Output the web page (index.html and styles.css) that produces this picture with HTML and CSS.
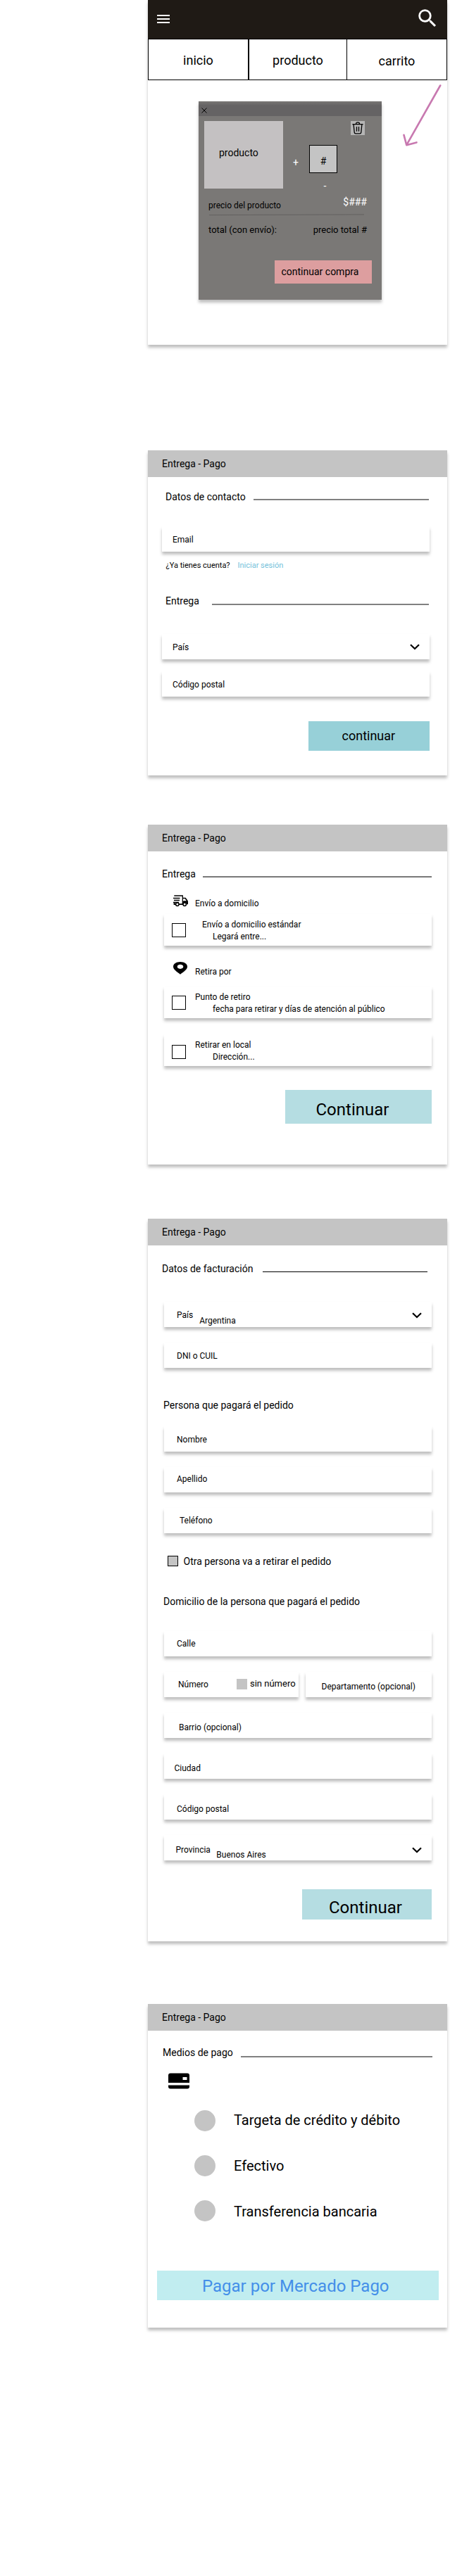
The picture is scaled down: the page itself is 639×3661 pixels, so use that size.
FILE: index.html
```html
<!DOCTYPE html>
<html lang="es">
<head>
<meta charset="utf-8">
<title>Entrega - Pago</title>
<link rel="stylesheet" href="styles.css">
</head>
<body>
<main class="screens">

  <section class="screen screen-cart">
    <header class="topbar">
      <svg class="icon-menu" width="18" height="12" viewBox="0 0 18 12" fill="#fff"><path d="M0 0h18v2H0zM0 5h18v2H0zM0 10h18v2H0z"/></svg>
      <svg class="icon-search" width="34" height="34" viewBox="0 0 24 24" fill="#fff"><path d="M15.5 14h-.79l-.28-.27A6.471 6.471 0 0 0 16 9.5 6.5 6.5 0 1 0 9.5 16c1.61 0 3.09-.59 4.23-1.57l.27.28v.79l5 4.99L20.49 19l-4.99-5zm-6 0C7.01 14 5 11.99 5 9.5S7.01 5 9.5 5 14 7.01 14 9.5 11.99 14 9.5 14z"/></svg>
    </header>
    <nav class="tabs">
      <a class="tab tab-home">inicio</a>
      <a class="tab tab-product">producto</a>
      <a class="tab tab-cart">carrito</a>
    </nav>
    <div class="modal">
      <div class="modal-bar">
        <svg width="8" height="8" viewBox="0 0 8 8" stroke="#000" stroke-width="1"><path d="M.5.5l7 7M7.5.5l-7 7"/></svg>
      </div>
      <div class="item">
        <div class="thumb">producto</div>
        <span class="plus">+</span>
        <div class="qty">
          <span class="qty-box">#</span>
          <span class="minus">-</span>
        </div>
        <span class="trash">
          <svg width="20" height="20" viewBox="0 0 20 20" fill="none" stroke="#000" stroke-width="1.3"><path d="M2.4 4.6h15.2M7.4 4.4c0-3.3 5.2-3.3 5.2 0M4.1 4.8l1.1 11.3c.1 1 .8 1.7 1.8 1.7h6c1 0 1.700-.7 1.800-1.700L15.900 4.800M8.500 8v6.800M11.500 8v6.800"/></svg>
        </span>
      </div>
      <div class="price-row"><span>precio del producto</span><span class="price">$###</span></div>
      <svg class="divider" width="220" height="3" viewBox="0 0 220 3" stroke="#636160"><path d="M0 1.600L220 .9"/></svg>
      <div class="total-row"><span>total (con envío):</span><span>precio total #</span></div>
      <a class="btn btn-buy">continuar compra</a>
    </div>
    <svg class="arrow" width="56" height="90" viewBox="0 0 56 90" fill="none" stroke="#c879b0" stroke-width="2.600"><path d="M53.200 1.500L5.300 86.200M1.500 71.800l3.800 14.400 14.200-3.800" stroke-linecap="round" stroke-linejoin="round"/></svg>
  </section>

  <section class="screen screen-contact">
    <header class="bar">Entrega - Pago</header>
    <div class="title t-contact"><span>Datos de contacto</span><i class="rule"></i></div>
    <div class="field f-email">Email</div>
    <p class="login"><span>¿Ya tienes cuenta?</span><a class="login-link">Iniciar sesión</a></p>
    <div class="title t-delivery"><span>Entrega</span><i class="rule"></i></div>
    <div class="field f-country">País<svg class="chevron" width="14" height="9" viewBox="0 0 14 9"><path d="M1 1.200l6 5.800 6-5.800"/></svg></div>
    <div class="field f-zip">Código postal</div>
    <a class="btn btn-contact">continuar</a>
  </section>

  <section class="screen screen-shipping">
    <header class="bar">Entrega - Pago</header>
    <div class="title t-shipping"><span>Entrega</span><i class="rule"></i></div>
    <div class="method m-truck">
      <svg width="22" height="17" viewBox="0 0 22 17" fill="none" stroke="#000"><path d="M2.300 1h12v12M1 4.500h9.500M2 7.500h8M1 10.500h8" stroke-width="1.300"/><path d="M2.500 10v3.200h2M9 13.200h6M14.500 4.500h3.700l2.800 4" stroke-width="1.700"/><path d="M16 8.300h6v5h-2.300v-2.300h-5V9z" fill="#000" stroke="none"/><circle cx="6.800" cy="13.300" r="2.200" stroke-width="1.500"/><circle cx="17.200" cy="13.300" r="2.200" stroke-width="1.500" fill="#fff"/></svg>
      <span>Envío a domicilio</span>
    </div>
    <div class="option o-home"><i class="check"></i><div class="option-text"><b>Envío a domicilio estándar</b><small>Legará entre...</small></div></div>
    <div class="method m-pin">
      <svg width="20" height="18" viewBox="0 0 20 18"><path fill-rule="evenodd" d="M10 0C4.300 0 0 2.800 0 6.700 0 11 5 13.700 10 17.700 15 13.700 20 11 20 6.700 20 2.800 15.700 0 10 0zm0 3.700c2.600 0 4.300 1.300 4.300 3.100S12.600 9.900 10 9.900 5.700 8.600 5.700 6.800 7.400 3.700 10 3.700z"/></svg>
      <span>Retira por</span>
    </div>
    <div class="option o-point"><i class="check"></i><div class="option-text"><b>Punto de retiro</b><small>fecha para retirar y días de atención al público</small></div></div>
    <div class="option o-local"><i class="check"></i><div class="option-text"><b>Retirar en local</b><small>Dirección...</small></div></div>
    <a class="btn btn-shipping">Continuar</a>
  </section>

  <section class="screen screen-billing">
    <header class="bar">Entrega - Pago</header>
    <div class="title t-billing"><span>Datos de facturación</span><i class="rule"></i></div>
    <div class="field f-bill-country">País<span class="value">Argentina</span><svg class="chevron" width="14" height="9" viewBox="0 0 14 9"><path d="M1 1.200l6 5.800 6-5.800"/></svg></div>
    <div class="field f-id">DNI o CUIL</div>
    <h3 class="subtitle s-payer">Persona que pagará el pedido</h3>
    <div class="field f-name">Nombre</div>
    <div class="field f-surname">Apellido</div>
    <div class="field f-phone">Teléfono</div>
    <label class="other"><i class="box"></i>Otra persona va a retirar el pedido</label>
    <h3 class="subtitle s-address">Domicilio de la persona que pagará el pedido</h3>
    <div class="field f-street">Calle</div>
    <div class="pair">
      <div class="field f-number">Número<i class="box"></i><span class="no-number">sin número</span></div>
      <div class="field f-flat">Departamento (opcional)</div>
    </div>
    <div class="field f-area">Barrio (opcional)</div>
    <div class="field f-city">Ciudad</div>
    <div class="field f-bill-zip">Código postal</div>
    <div class="field f-state">Provincia<span class="value">Buenos Aires</span><svg class="chevron" width="14" height="9" viewBox="0 0 14 9"><path d="M1 1.200l6 5.800 6-5.800"/></svg></div>
    <a class="btn btn-billing">Continuar</a>
  </section>

  <section class="screen screen-payment">
    <header class="bar">Entrega - Pago</header>
    <div class="title t-payment"><span>Medios de pago</span><i class="rule"></i></div>
    <svg class="icon-card" width="30" height="23" viewBox="0 0 30 23"><path fill-rule="evenodd" d="M3 .5h24a3 3 0 0 1 3 3V14H0V3.500a3 3 0 0 1 3-3zm17.500 5.500v4h6V6zM0 17.500h30v2a3 3 0 0 1-3 3H3a3 3 0 0 1-3-3z"/></svg>
    <ul class="methods">
      <li class="pay p-card"><i class="radio"></i><span>Targeta de crédito y débito</span></li>
      <li class="pay p-cash"><i class="radio"></i><span>Efectivo</span></li>
      <li class="pay p-bank"><i class="radio"></i><span>Transferencia bancaria</span></li>
    </ul>
    <a class="btn btn-pay">Pagar por Mercado Pago</a>
  </section>

</main>
</body>
</html>
```

FILE: styles.css
```css
* { box-sizing: border-box; }

body {
  margin: 0;
  min-height: 3661px;
  background: #fff;
  color: #000;
  font: 12px/14px Roboto, "Liberation Sans", sans-serif;
}

svg { display: block; flex: none; }
i { font-style: normal; flex: none; }

.screens {
  display: flex;
  flex-direction: column;
  width: 425px;
  margin-left: 210px;
}

.screen {
  position: relative;
  display: flex;
  flex-direction: column;
  align-items: stretch;
  flex: none;
  background: #fff;
  box-shadow: 0 4px 4px rgba(0, 0, 0, .25);
}
.screen-cart { height: 490px; }
.screen-contact { height: 462px; margin-top: 150px; }
.screen-shipping { height: 483px; margin-top: 70px; }
.screen-billing { height: 1027px; margin-top: 77px; }
.screen-payment { height: 460px; margin-top: 89px; }

/* Cart */
.topbar {
  display: flex;
  justify-content: space-between;
  height: 55px;
  padding: 9px 11px 0 13px;
  background: #1f1a15;
}
.icon-menu { margin-top: 12px; }
.tabs { display: flex; height: 59px; font-size: 18px; line-height: 21px; }
.tab { border: 1px solid #000; padding-top: 19px; text-align: center; }
.tab-home { width: 143px; }
.tab-product { width: 140px; }
.tab-cart { width: 142px; border-left: 0; padding-top: 20px; }

.modal {
  display: flex;
  flex-direction: column;
  width: 260px;
  height: 282px;
  margin: 30px 0 0 72px;
  background: #7a7876;
  box-shadow: 0 4px 4px rgba(0, 0, 0, .25);
}
.modal-bar {
  height: 21px;
  padding: 9px 0 0 3.500px;
  background: linear-gradient(#797775, #656364 6px);
}
.item { display: flex; align-items: flex-start; height: 96px; margin: 7px 0 0 8px; }
.thumb {
  width: 112px;
  height: 96px;
  padding: 37px 0 0 21px;
  background: #c4c1c2;
  font-size: 14px;
  line-height: 16px;
}
.plus { width: 37px; padding: 51px 0 0 14px; color: #fff; font-size: 14px; line-height: 16px; }
.qty { display: flex; flex-direction: column; align-items: center; width: 40px; padding-top: 34px; }
.qty-box {
  width: 40px;
  height: 40px;
  padding-top: 14px;
  border: 1px solid #000;
  background: #c4c4c4;
  font-size: 14px;
  line-height: 16px;
  text-align: center;
}
.minus { margin: 11px 0 0 5px; color: #fff; font-size: 14px; }
.trash { width: 20px; height: 20px; margin-left: 19px; background: #b5b5b5; }
.price-row { display: flex; justify-content: space-between; height: 25px; margin: 11px 21px 0 14px; }
.price-row span:first-child { margin-top: 6px; }
.price-row .price { color: #fff; font-size: 14px; line-height: 16px; }
.divider { margin-left: 15px; }
.total-row { display: flex; justify-content: space-between; margin: 12px 21px 0 14px; font-size: 13px; line-height: 15px; }

.arrow { position: absolute; left: 362px; top: 120px; }

/* Shared form pieces */
.bar { height: 38px; padding: 11px 0 0 20px; background: #c4c4c4; font-size: 14px; line-height: 16px; }
.title { display: flex; justify-content: space-between; height: 16px; font-size: 14px; line-height: 16px; }
.rule { height: 2px; background: #808080; }

.field {
  display: flex;
  align-items: flex-start;
  flex: none;
  height: 36px;
  margin: 22px 22px 0 23px;
  padding: 12px 14.500px 0 18px;
  background: #fff;
  box-shadow: 0 4px 4px rgba(0, 0, 0, .25);
}
.chevron { margin: 2px 0 0 auto; fill: none; stroke: #000; stroke-width: 2.200; }

.btn { flex: none; align-self: flex-end; background: #b5dde2; font-size: 24px; line-height: 28px; }
.btn-buy { width: 138px; height: 33px; margin: 36px 14px 0 0; padding: 8px 0 0 9.500px; background: #dd9e9f; font-size: 14px; line-height: 16px; }
.btn-contact { width: 172px; height: 42px; margin: 35px 25px 0 0; padding: 10px 0 0 47.500px; background: #97d0d8; font-size: 18px; line-height: 21px; }
.btn-shipping { width: 208px; height: 48px; margin: 34px 22px 0 0; padding: 14px 0 0 43.500px; }
.btn-billing { width: 184px; height: 43px; margin: 41px 22px 0 0; padding: 12px 0 0 38px; }
.btn-pay { width: 400px; height: 42px; margin: 70px 12px 0 0; padding: 8px 0 0 64px; background: #c1edf0; color: #448fe9; }

/* Contact */
.t-contact { margin: 20px 26px 0 25px; }
.t-contact .rule { width: 249px; margin-top: 11px; }
.t-delivery { margin: 36px 26px 0 25px; }
.t-delivery .rule { width: 308px; margin-top: 12px; }
.screen-contact .field { margin: 17px 25px 0 20px; padding-left: 15px; }
.screen-contact .f-email { margin-top: 34px; }
.screen-contact .f-country { margin-top: 39px; }
.login { display: flex; margin: 13px 0 0 25.500px; font-size: 11px; line-height: 13px; }
.login span { width: 102px; }
.login-link { color: #74c1da; }

/* Shipping */
.t-shipping { margin: 24px 22px 0 20px; }
.t-shipping .rule { width: 325px; margin-top: 11px; background: linear-gradient(#909090 1px, #606060 1px); }
.method { display: flex; padding-left: 35px; }
.method svg { margin-right: 10px; }
.m-truck { height: 19px; margin-top: 22px; }
.m-truck span { margin-top: 5px; }
.m-pin { height: 21px; margin-top: 23px; padding-left: 36px; }
.m-pin svg { margin-right: 11px; }
.m-pin span { margin-top: 7px; }
.option {
  display: flex;
  flex: none;
  height: 45px;
  margin: 8px 22px 0 23px;
  padding: 8px 0 0 11px;
  background: #fff;
  box-shadow: 0 4px 4px rgba(0, 0, 0, .25);
}
.check { width: 20px; height: 20px; margin-top: 5px; border: 1px solid #000; }
.option-text { display: flex; flex-direction: column; gap: 3px; margin-left: 13px; }
.option-text b { font-weight: 400; }
.option-text small { font-size: 12px; padding-left: 25px; }
.o-home .option-text b { padding-left: 10px; }
.o-point { margin-top: 14px; }
.o-local { margin-top: 23px; }
.o-local .check { margin-top: 7px; }

/* Billing */
.t-billing { margin: 25px 28px 0 20px; }
.t-billing .rule { width: 234px; height: 1px; margin-top: 12px; background: #000; }
.f-bill-country { margin-top: 39px; }
.f-bill-country .value { margin: 8px 0 0 9px; }
.f-bill-country .chevron { margin-top: 3px; }
.subtitle { margin: 45px 0 0 22px; font-size: 14px; line-height: 16px; font-weight: 400; }
.s-address { margin-top: 41px; }
.f-surname { padding-top: 10px; }
.f-phone { padding: 11px 0 0 22px; }
.other { display: flex; height: 16px; margin: 32px 0 0 28px; font-size: 14px; line-height: 17px; }
.box { width: 15px; height: 15px; background: #c4c4c4; }
.other .box { margin-right: 7.500px; border: 1px solid #000; }
.f-street { margin-top: 34px; padding-top: 11px; }
.pair { display: flex; gap: 10px; margin: 22px 22px 0 23px; }
.pair .field { margin: 0; }
.f-number { width: 191px; padding: 11px 0 0 20px; justify-content: flex-start; }
.f-number .box { margin: -1px 4px 0 auto; }
.f-number .no-number { width: 69px; margin-top: -2px; font-size: 13px; line-height: 15px; }
.f-flat { width: 179px; padding: 14px 0 0 22.500px; }
.f-area { padding: 14px 0 0 21px; }
.f-city { padding: 14px 0 0 14.500px; }
.f-bill-zip { padding-top: 14px; }
.f-state { padding: 14px 14.500px 0 16.500px; }
.f-state .value { margin: 7px 0 0 8.500px; }
.f-state .chevron { margin-top: 3px; }

/* Payment */
.t-payment { margin: 23px 21px 0 21px; }
.t-payment .rule { width: 272px; margin-top: 13px; }
.icon-card { margin: 21px 0 0 29px; }
.methods { display: flex; flex-direction: column; gap: 34px; margin: 30px 0 0 66px; padding: 0; list-style: none; font-size: 20px; line-height: 24px; }
.pay { display: flex; gap: 26px; height: 30px; }
.radio { width: 30px; height: 30px; border-radius: 50%; background: #c4c4c4; }
.p-card span { margin-top: 2px; }
.p-cash span { margin-top: 3px; }
.p-bank span { margin-top: 4px; }
```
